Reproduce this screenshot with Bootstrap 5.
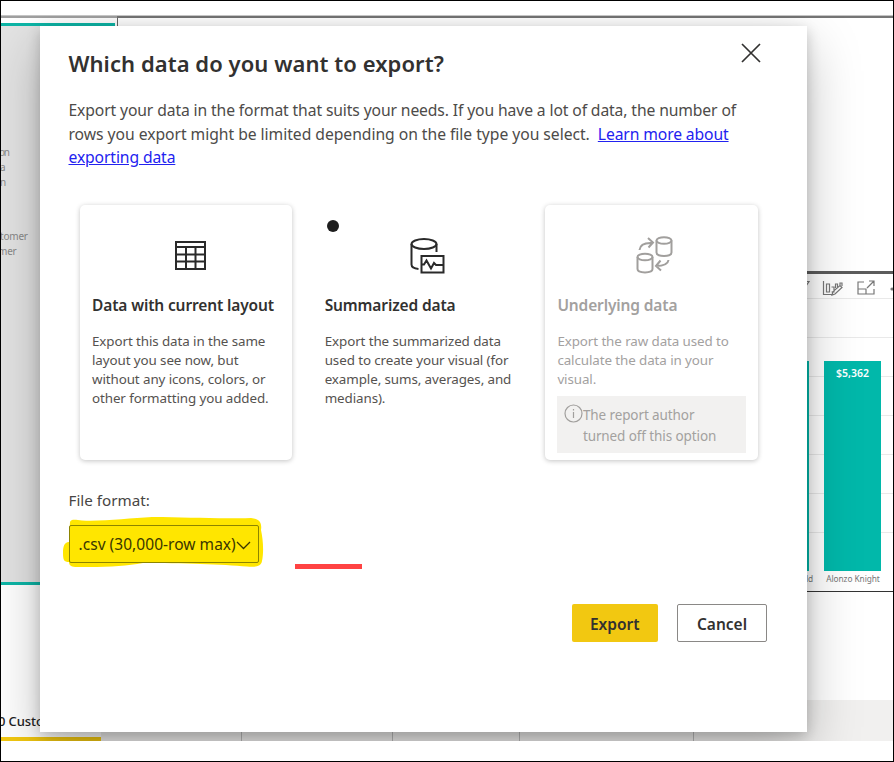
<!DOCTYPE html>
<html lang="en">
<head>
<meta charset="utf-8">
<meta name="viewport" content="width=device-width, initial-scale=1">
<title>Export data</title>
<link href="https://cdn.jsdelivr.net/npm/bootstrap@5.3.0/dist/css/bootstrap.min.css" rel="stylesheet">
<style>
html, body { height: 100%; overflow: hidden; }
body { font-family: "Noto Sans", "Open Sans", sans-serif; color: #323130; background: #fff; }
.frame { width: 894px; height: 762px; border: 1px solid #000; padding-top: 14px; }
.stage { height: 726px; overflow: hidden; border-top: 1px solid #c4c4c4; }
.rule { height: 2px; flex: none; background: linear-gradient(90deg, #a0a0a0 116px, #757575 116px); }
.side { width: 114px; height: 562px; margin-top: 5px; background: #e3e3e3; border: solid #0db5a6; border-width: 3px 0; font-size: 10px; line-height: 15px; color: #888; overflow: hidden; }
.side p { margin: 0; white-space: nowrap; letter-spacing: -.2px; }
.side .first-group { padding-top: 119px; }
.side .first-group p:first-child { letter-spacing: -1.2px; margin-left: -2px; }
.side .first-group p + p { margin-left: -1px; }
.side .second-group { padding-top: 39px; }
.side .second-group p { margin-left: -1px; }
.side .second-group p + p { margin-left: -3px; }
.canvas-col { border-left: 1px solid #666; margin-left: 2px; }
.blank { height: 253px; flex: none; }
.visual { height: 321px; border-top: 3px solid #5c5c5c; border-bottom: 1px solid #333; flex: none; padding-left: 687px; }
.visual-tools { height: 24px; padding-top: 4px; }
.plot { height: 272px; background: repeating-linear-gradient(180deg, #e9e9e9 0 1px, transparent 1px 39px); padding-top: 63px; }
.bar-a { width: 4px; height: 210px; background: #01b8aa; }
.bar-b { width: 57px; height: 210px; background: #01b8aa; margin-left: 15px; color: #fff; font-size: 10.5px; font-weight: 600; padding-top: 4px; line-height: 16px; }
.names { font-size: 8.3px; line-height: 18px; color: #777; white-space: nowrap; letter-spacing: -.05px; padding-left: 1px; }
.names span + span { margin-left: 13px; }
.tabs { height: 41px; flex: none; background: #f1f0ef; }
.tab-on { width: 100px; background: #fff; border-bottom: 4px solid #f2c811; font-size: 13px; font-weight: 500; padding-top: 11px; line-height: 20px; letter-spacing: -.1px; color: #222; text-indent: -3px; }
.tab-off { border-right: 1px solid #bbb; }
.t1 { width: 141px; } .t2 { width: 151px; } .t3 { width: 127px; } .t4 { width: 174px; }
.dialog-box { position: absolute; left: 39px; top: 10px; width: 767px; height: 706px; background: #fff; box-shadow: 0 20px 50px rgba(0,0,0,.25), 0 4px 13px rgba(0,0,0,.2); padding: 20px 28px 0 28.5px; }
.dialog-box h1 { font-size: 22px; font-weight: 600; line-height: 34px; margin: 0; white-space: nowrap; letter-spacing: .06px; }
.close-x { align-self: flex-start; margin: -3px 18px 0 0; padding: 0; border: 0; background: none; line-height: 0; }
.intro { margin: 19px 0 0; font-size: 15.7px; line-height: 23.5px; white-space: nowrap; color: #4d4b49; letter-spacing: -.12px; }
.intro .line-two { letter-spacing: -.04px; }
.intro a { color: #2222f0; }
.choices { margin: 35px 0 0 11px; gap: 20px; }
.choice { width: 212.7px; height: 255px; padding: 28px 12px 0; border-radius: 5px; white-space: nowrap; }
.raised { box-shadow: 0 1px 5px rgba(0,0,0,.24); }
.choice h2 { font-size: 15.5px; font-weight: 600; line-height: 22px; margin: 17px 0 0 .5px; letter-spacing: -.13px; }
.choice p { font-size: 13.4px; line-height: 19px; margin: 16px 0 0 .5px; color: #55524f; letter-spacing: -.1px; }
.choice svg { margin-left: 10px; }
.choice .sum-icon { margin-left: 16px; }
.choice .raw-icon { margin-left: 5px; }
.dim h2, .dim p { color: #a3a19f; }
.pick { position: absolute; left: 15px; top: 15px; width: 12px; height: 12px; border-radius: 50%; background: #1e1e1e; }
.choice .note { width: 189px; height: 57px; margin-top: 7px; background: #f2f1f0; color: #a3a19f; font-size: 13.5px; line-height: 21px; padding: 9px 0 0 7px; letter-spacing: -.1px; }
.choice .note svg { margin: -1px 0 0; flex: none; }
.fmt { font-size: 15.2px; line-height: 20px; margin-top: 30px; color: #484644; letter-spacing: .02px; }
.select-wrap { width: 190px; height: 38px; margin-top: 15px; }
.marker { position: absolute; left: -6px; top: -9px; }
.select-box { position: relative; height: 38px; border: 1.5px solid #8c8400; border-radius: 2px; padding: 3px 0 0 9px; font-size: 15.5px; letter-spacing: .04px; white-space: nowrap; color: #3a3600; }
.underscore { width: 67px; height: 5px; background: #ff4343; margin: 54px 0 -6px 36px; }
.actions { margin-top: 41px; padding-right: 12px; gap: 19px; }
.actions .btn { height: 38px; padding: 4px 0 0; border-radius: 2px; font-size: 15.5px; font-weight: 600; color: #323130; }
.actions .go { width: 86.5px; background: #f2c811; border: 0; }
.actions .stop { width: 90px; background: #fff; border: 1px solid #8a8886; }
</style>
<script src="https://cdn.jsdelivr.net/npm/bootstrap@5.3.0/dist/js/bootstrap.bundle.min.js"></script>
</head>
<body>
<div class="frame">
 <div class="stage position-relative d-flex flex-column">
  <div class="rule"></div>
  <div class="d-flex flex-grow-1">
   <aside class="side">
    <div class="first-group"><p>on</p><p>a</p><p>n</p></div>
    <div class="second-group"><p>tomer</p><p>mer</p></div>
   </aside>
   <section class="canvas-col flex-grow-1">
    <div class="blank"></div>
    <div class="visual">
     <div class="visual-tools d-flex">
      <svg width="88" height="20" viewBox="0 0 88 20" fill="none" stroke="#777" stroke-width="1.2"><path d="M0 3.500h4L1 8M18.500 3v13.500h10M21.500 6h3v8h-3zM26.500 9h2.500v5h-2.500M30.500 10V6h2v3M35 8V5h2v3M27 17l1-3.500 7-6 2 2-7 6.500zM59 4h-6v12h16v-5M53 11h8v5M62 10l7-7M64 3h5v5"/><circle cx="87" cy="11" r="1" fill="#666"/></svg>
     </div>
     <div class="plot d-flex"><div class="bar-a"></div><div class="bar-b text-center">$5,362</div></div>
     <div class="names"><span>ld</span><span>Alonzo Knight</span></div>
    </div>
   </section>
  </div>
  <nav class="tabs d-flex">
   <div class="tab-on text-nowrap overflow-hidden">0 Customers</div>
   <div class="tab-off t1"></div><div class="tab-off t2"></div><div class="tab-off t3"></div><div class="tab-off t4"></div>
  </nav>

  <div class="dialog-box" role="dialog">
   <div class="d-flex justify-content-between">
    <h1>Which data do you want to export?</h1>
    <button class="close-x" aria-label="Close"><svg width="20" height="20" viewBox="0 0 20 20" stroke="#323130" stroke-width="1.700"><path d="M1 1l18 18M19 1L1 19"/></svg></button>
   </div>
   <p class="intro">Export your data in the format that suits your needs. If you have a lot of data, the number of<br><span class="line-two">rows you export might be limited depending on the file type you select. &nbsp;</span><a href="#">Learn more about<br>exporting data</a></p>
   <div class="choices d-flex">
    <div class="choice raised">
     <div class="text-center"><svg width="40" height="44" viewBox="0 0 40 44" fill="none" stroke="#2a2a2a" stroke-width="2"><path d="M5 9h29v27H5zM5 14h29M5 21.500h29M5 28.500h29M15 14v22M24.500 14v22"/></svg></div>
     <h2>Data with current layout</h2>
     <p>Export this data in the same<br>layout you see now, but<br>without any icons, colors, or<br>other formatting you added.</p>
    </div>
    <div class="choice position-relative">
     <span class="pick"></span>
     <div class="text-center"><svg class="sum-icon" width="40" height="44" viewBox="0 0 40 44" fill="none" stroke="#2a2a2a" stroke-width="2"><ellipse cx="17" cy="11" rx="12.500" ry="5"/><path d="M4.500 11v20.500c0 2.500 3 4 7 4.500M29.500 11v8M14.500 23h22v16.500h-22zM14.500 31.500h2.500l2.500-4 4.500 8 3-5.500 2 2h7.500"/></svg></div>
     <h2>Summarized data</h2>
     <p>Export the summarized data<br>used to create your visual (for<br>example, sums, averages, and<br>medians).</p>
    </div>
    <div class="choice raised dim">
     <div class="text-center"><svg class="raw-icon" width="40" height="44" viewBox="0 0 40 44" fill="none" stroke="#a19f9d" stroke-width="2"><ellipse cx="30" cy="7.500" rx="7.500" ry="3.300"/><path d="M22.500 7.500v12c0 4.500 15 4.500 15 0v-12"/><ellipse cx="11" cy="24" rx="7.500" ry="3.300"/><path d="M3.500 24v12c0 4.500 15 4.500 15 0V24M5.500 17c.5-5 5-7.500 13-7M14 5l5 4.500-4.500 5M34.500 27c-.5 4-5 6-12.500 6M26.500 27.500L22 33l5 4.500"/></svg></div>
     <h2>Underlying data</h2>
     <p>Export the raw data used to<br>calculate the data in your<br>visual.</p>
     <div class="note d-flex"><svg width="19" height="19" viewBox="0 0 19 19" fill="none" stroke="#a19f9d" stroke-width="1.200"><circle cx="9.500" cy="9.500" r="8.500"/><path d="M9.500 8v6M9.500 5v1.500"/></svg><span>The report author<br>turned off this option</span></div>
    </div>
   </div>
   <div class="fmt">File format:</div>
   <div class="d-flex">
    <div class="select-wrap position-relative">
     <svg class="marker" width="204" height="54" viewBox="0 0 204 54"><path fill="#ffe600" d="M7 6c1-3 5-2.500 12-1.500 22 1 48-2.500 70-3.500 35 0 60 2 99 1 9 1 11 5 10 12 2 9 3 22 1 31-1 6-7 6-15 5.500-24-2-66-3.500-104-3.500-18 3-35 4.500-66 4-5 0-8-1-8-5-5 0-6-2-6-9 0-6 1-11 6-11z"/></svg>
     <div class="select-box d-flex align-items-center"><span>.csv (30,000-row max)</span><svg width="15" height="9" viewBox="0 0 15 9" fill="none" stroke="#3a3600" stroke-width="1.300"><path d="M1 1l6.500 6.500L14 1"/></svg></div>
    </div>
    <div class="underscore"></div>
   </div>
   <div class="actions d-flex justify-content-end">
    <button class="btn go">Export</button><button class="btn stop">Cancel</button>
   </div>
  </div>
 </div>
</div>
</body>
</html>
